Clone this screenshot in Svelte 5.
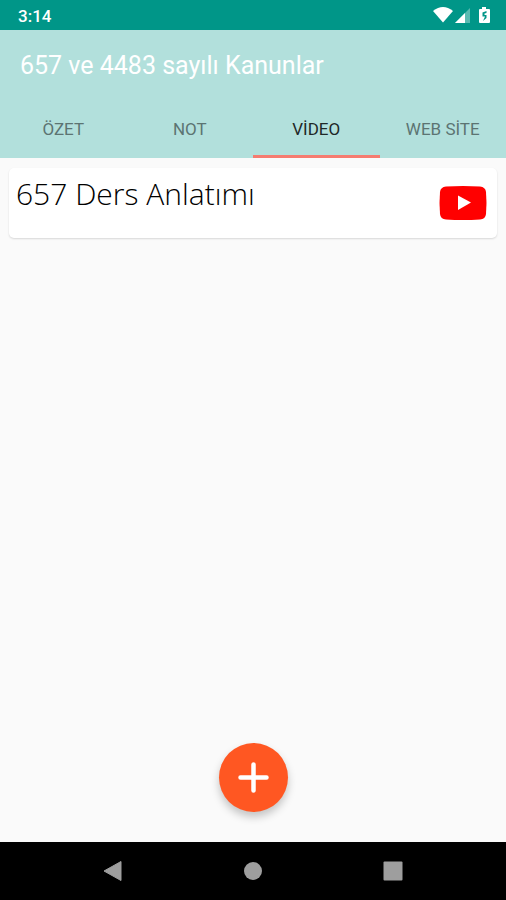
<script>
  const tabs = ['ÖZET', 'NOT', 'VİDEO', 'WEB SİTE'];
  let selected = $state(2);
</script>

<div class="screen">
  <div class="status">
    <span class="clock">3:14</span>
    <svg class="indicators" width="58" height="20" viewBox="0 0 58 20" fill="#fff" aria-hidden="true">
      <path d="M0 6Q10 -2 20 6L10 17.500Z" />
      <path d="M22 18L37 3V18Z" opacity=".35" />
      <path d="M22 18L32 8V18Z" />
      <path d="M47 4H49V2H53V4H56Q57 4 57 5V17Q57 18 56 18H47Q46 18 46 17V5Q46 4 47 4Z" />
      <path d="M53.500 6L49.500 7.500V11.500H52L50 16L53.500 13V10H51.500V8.500L53.500 8Z" fill="#009688" />
    </svg>
  </div>

  <header>
    <h1>657 ve 4483 sayılı Kanunlar</h1>
    <div class="tabs" role="tablist">
      {#each tabs as tab, i}
        <button
          role="tab"
          class:active={selected === i}
          aria-selected={selected === i}
          onclick={() => (selected = i)}>{tab}</button>
      {/each}
    </div>
  </header>

  <main>
    <article class="card">
      <h2>657 Ders Anlatımı</h2>
      <button class="play" aria-label="Videoyu oynat">
        <svg width="48" height="36" viewBox="0 0 48 36" aria-hidden="true">
          <path d="M7 1.500Q24 .5 41 1.500Q46.500 2 47 7Q48 18 47 29Q46.500 34 41 34.500Q24 35.500 7 34.500Q1.500 34 1 29Q0 18 1 7Q1.500 2 7 1.500Z" fill="#f00" />
          <path d="M19 10.500L32 17.500L19 25Z" fill="#fff" />
        </svg>
      </button>
    </article>
    <button class="add" aria-label="Ekle">
      <svg width="33" height="33" viewBox="0 0 33 33" aria-hidden="true">
        <path d="M16.500 3.500V29.500M3.500 16.500H29.500" stroke="#fff" stroke-width="4.500" stroke-linecap="round" />
      </svg>
    </button>
  </main>

  <nav>
    <button aria-label="Geri">
      <svg width="22" height="22" viewBox="0 0 22 22"><path d="M2 11L19 1.500V20.500Z" stroke="#9e9e9e" stroke-linejoin="round" /></svg>
    </button>
    <button aria-label="Ana ekran">
      <svg width="22" height="22" viewBox="0 0 22 22"><circle cx="11" cy="11" r="9" /></svg>
    </button>
    <button aria-label="Son uygulamalar">
      <svg width="22" height="22" viewBox="0 0 22 22"><rect x="1.500" y="1.500" width="19" height="19" rx="1" /></svg>
    </button>
  </nav>
</div>

<style>
  :global(body) {
    margin: 0;
  }

  .screen {
    display: flex;
    flex-direction: column;
    min-height: 100vh;
    background: #fafafa;
    font-family: Roboto, "Liberation Sans", sans-serif;
  }

  button {
    padding: 0;
    border: 0;
    background: none;
    font: inherit;
    cursor: pointer;
  }

  svg {
    display: block;
  }

  .status {
    display: flex;
    align-items: center;
    justify-content: space-between;
    height: 30px;
    padding: 0 15px 0 18px;
    background: #009688;
    color: #fff;
  }

  .clock {
    font-size: 17px;
    font-weight: 500;
    line-height: 30px;
    padding-top: 2px;
  }

  header {
    background: #b2e0dc;
  }

  h1 {
    margin: 0;
    padding: 0 20px;
    color: #fff;
    font-size: 25px;
    font-weight: 400;
    line-height: 72px;
  }

  .tabs {
    display: grid;
    grid-template-columns: repeat(4, 1fr);
  }

  .tabs button {
    height: 56px;
    border-bottom: 3px solid transparent;
    color: #5c7472;
    font-size: 17px;
  }

  .tabs .active {
    border-bottom-color: #f57c70;
    color: #1f2827;
  }

  main {
    display: flex;
    flex: 1;
    flex-direction: column;
    justify-content: space-between;
    padding: 10px 9px 30px;
  }

  .card {
    display: flex;
    align-items: center;
    justify-content: space-between;
    height: 70px;
    padding: 0 10px 0 7px;
    border-radius: 5px;
    background: #fff;
    box-shadow: 0 1px 2px rgb(0 0 0 / 14%);
  }

  h2 {
    align-self: flex-start;
    margin: 0;
    color: #000;
    font-family: "Open Sans", "Noto Sans", sans-serif;
    font-size: 30px;
    font-weight: 350;
    line-height: 52px;
  }

  .add {
    display: flex;
    align-items: center;
    align-self: center;
    justify-content: center;
    width: 69px;
    height: 69px;
    border-radius: 50%;
    background: #ff5722;
    box-shadow: 0 5px 8px rgb(0 0 0 / 22%);
  }

  nav {
    display: flex;
    justify-content: center;
    height: 58px;
    background: #000;
    fill: #9e9e9e;
  }

  nav button {
    display: flex;
    align-items: center;
    justify-content: center;
    width: 140px;
  }
</style>
